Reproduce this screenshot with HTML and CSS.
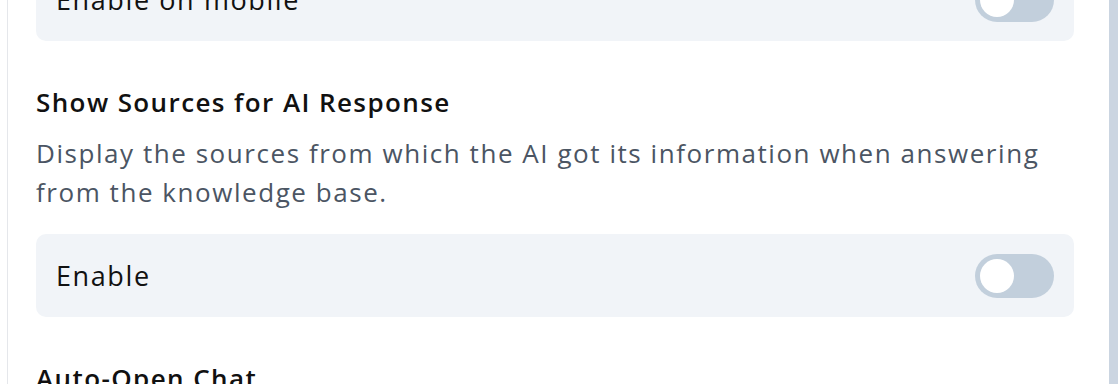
FILE: index.html
```html
<!DOCTYPE html>
<html lang="en">
<head>
    <meta charset="UTF-8">
    <meta name="viewport" content="width=device-width, initial-scale=1.0">
    <title>Chat settings</title>
    <link rel="stylesheet" href="styles.css">
</head>
<body>
    <div class="page">
        <div class="card">
            <div class="setting-row">
                <span>Enable on mobile</span>
                <label class="switch"><span class="knob"></span></label>
            </div>

            <div class="section">
                <h3>Show Sources for AI Response</h3>
                <p class="desc">Display the sources from which the AI got its information when answering from the knowledge base.</p>
                <div class="setting-row">
                    <span>Enable</span>
                    <label class="switch"><span class="knob"></span></label>
                </div>
            </div>

            <div class="section">
                <h3>Auto-Open Chat</h3>
            </div>
        </div>
        <div class="scrollbar"></div>
    </div>
</body>
</html>
```

FILE: styles.css
```css
* {
    margin: 0;
    padding: 0;
    box-sizing: border-box;
}

body {
    background: #ffffff;
    font-family: 'Open Sans', sans-serif;
    overflow: hidden;
}

.page {
    display: flex;
    height: 384px;
    overflow: hidden;
}

.card {
    flex: 1;
    margin-left: 7px;
    border-left: 1px solid #e5e7eb;
    padding: 0 35px 0 28px;
}

.scrollbar {
    width: 9px;
    background: #cbd5e1;
}

.setting-row {
    display: flex;
    align-items: center;
    justify-content: space-between;
    height: 83px;
    padding: 0 20px;
    background: #f1f4f8;
    border-radius: 10px;
    font-size: 27px;
    letter-spacing: 1.6px;
    color: #111111;
}

.card > .setting-row:first-child {
    margin-top: -42px;
}

.switch {
    display: flex;
    align-items: center;
    width: 79px;
    height: 44px;
    padding: 0 5px;
    border-radius: 22px;
    background: #c2cfdc;
}

.knob {
    width: 34px;
    height: 34px;
    border-radius: 50%;
    background: #ffffff;
}

.section {
    margin-top: 42px;
}

h3 {
    font-size: 26px;
    font-weight: 600;
    line-height: 39px;
    letter-spacing: 1.4px;
    color: #111111;
}

.desc {
    margin-top: 12px;
    margin-bottom: 22px;
    font-size: 26px;
    line-height: 39px;
    letter-spacing: 1.55px;
    color: #4b5563;
}
```
